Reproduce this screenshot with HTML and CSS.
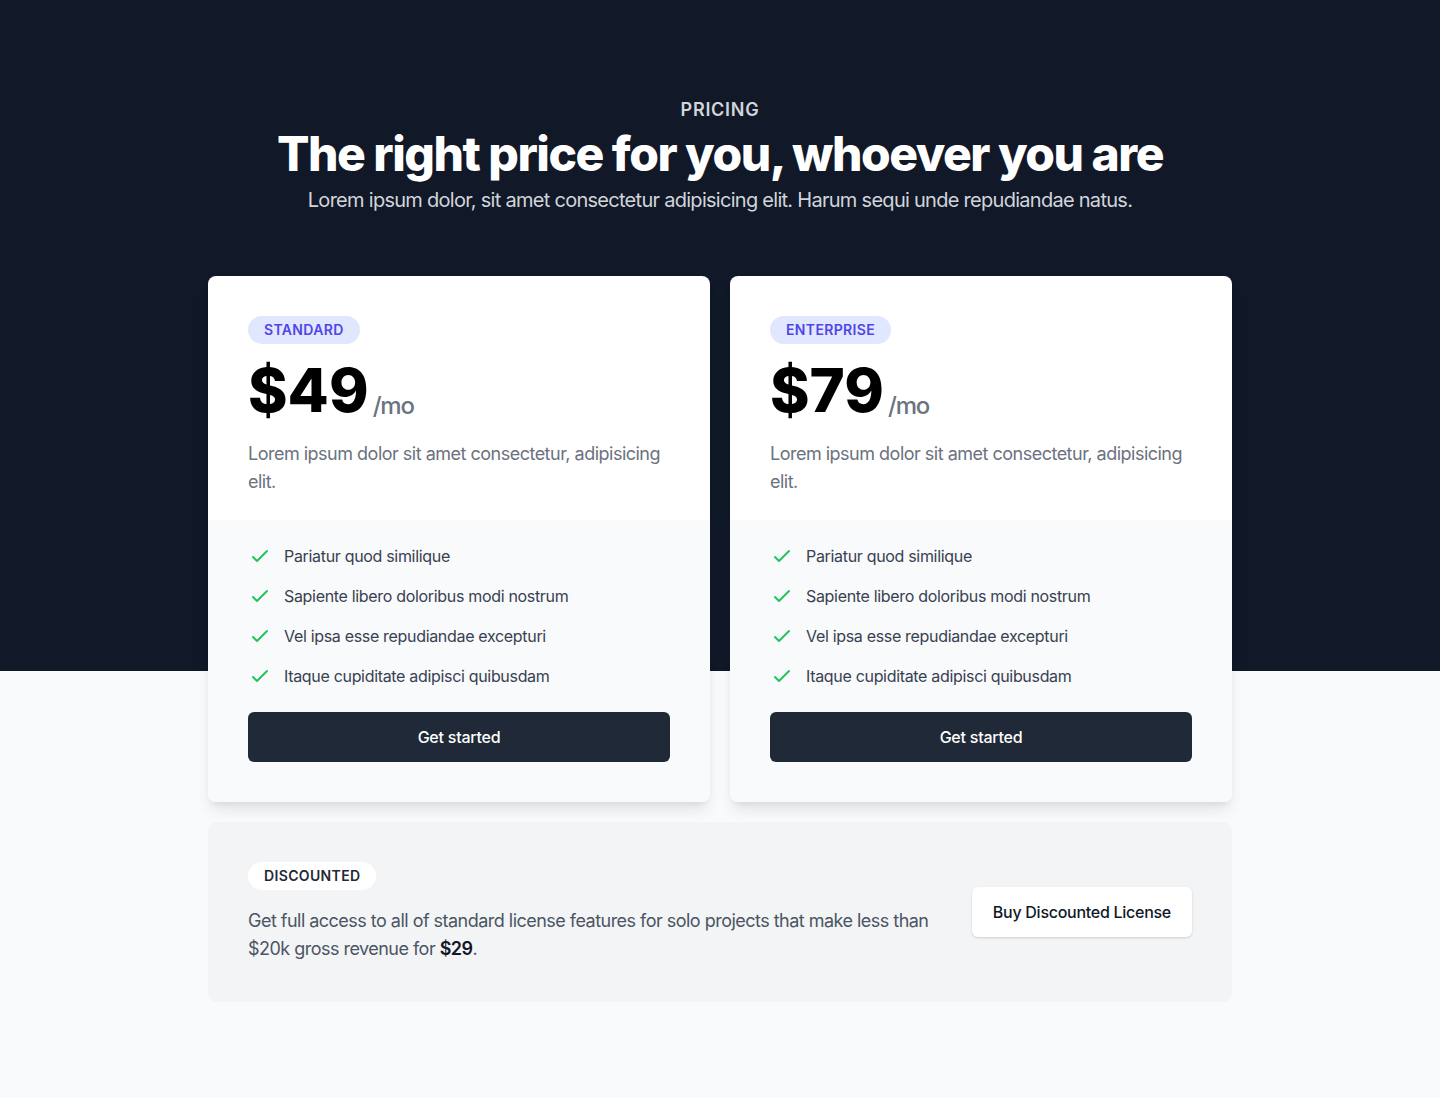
FILE: index.html
```html
<!DOCTYPE html>
<html lang="en">
<head>
<meta charset="utf-8">
<title>Pricing</title>
<link rel="stylesheet" href="styles.css">
</head>
<body>
<div class="page">
  <div class="hero">
    <div class="hero-inner">
      <h2 class="eyebrow">Pricing</h2>
      <p class="title">The right price for you, whoever you are</p>
      <p class="subtitle">Lorem ipsum dolor, sit amet consectetur adipisicing elit. Harum sequi unde repudiandae natus.</p>
    </div>
  </div>
  <div class="lower">
    <div class="cards-wrap">
      <div class="dark-fill"></div>
      <div class="cards">
        <div class="card">
          <div class="card-top">
            <span class="badge">Standard</span>
            <div class="price">$49<span class="per">/mo</span></div>
            <p class="desc">Lorem ipsum dolor sit amet consectetur, adipisicing elit.</p>
          </div>
          <div class="card-bottom">
            <ul class="features">
              <li><svg class="check" viewBox="0 0 24 24" fill="none" stroke="currentColor" stroke-width="2"><path stroke-linecap="round" stroke-linejoin="round" d="M5 13l4 4L19 7"/></svg><span>Pariatur quod similique</span></li>
              <li><svg class="check" viewBox="0 0 24 24" fill="none" stroke="currentColor" stroke-width="2"><path stroke-linecap="round" stroke-linejoin="round" d="M5 13l4 4L19 7"/></svg><span>Sapiente libero doloribus modi nostrum</span></li>
              <li><svg class="check" viewBox="0 0 24 24" fill="none" stroke="currentColor" stroke-width="2"><path stroke-linecap="round" stroke-linejoin="round" d="M5 13l4 4L19 7"/></svg><span>Vel ipsa esse repudiandae excepturi</span></li>
              <li><svg class="check" viewBox="0 0 24 24" fill="none" stroke="currentColor" stroke-width="2"><path stroke-linecap="round" stroke-linejoin="round" d="M5 13l4 4L19 7"/></svg><span>Itaque cupiditate adipisci quibusdam</span></li>
            </ul>
            <a class="btn-dark" href="#">Get started</a>
          </div>
        </div>
        <div class="card">
          <div class="card-top">
            <span class="badge">Enterprise</span>
            <div class="price">$79<span class="per">/mo</span></div>
            <p class="desc">Lorem ipsum dolor sit amet consectetur, adipisicing elit.</p>
          </div>
          <div class="card-bottom">
            <ul class="features">
              <li><svg class="check" viewBox="0 0 24 24" fill="none" stroke="currentColor" stroke-width="2"><path stroke-linecap="round" stroke-linejoin="round" d="M5 13l4 4L19 7"/></svg><span>Pariatur quod similique</span></li>
              <li><svg class="check" viewBox="0 0 24 24" fill="none" stroke="currentColor" stroke-width="2"><path stroke-linecap="round" stroke-linejoin="round" d="M5 13l4 4L19 7"/></svg><span>Sapiente libero doloribus modi nostrum</span></li>
              <li><svg class="check" viewBox="0 0 24 24" fill="none" stroke="currentColor" stroke-width="2"><path stroke-linecap="round" stroke-linejoin="round" d="M5 13l4 4L19 7"/></svg><span>Vel ipsa esse repudiandae excepturi</span></li>
              <li><svg class="check" viewBox="0 0 24 24" fill="none" stroke="currentColor" stroke-width="2"><path stroke-linecap="round" stroke-linejoin="round" d="M5 13l4 4L19 7"/></svg><span>Itaque cupiditate adipisci quibusdam</span></li>
            </ul>
            <a class="btn-dark" href="#">Get started</a>
          </div>
        </div>
      </div>
    </div>
    <div class="discount-wrap">
      <div class="discount">
        <div class="discount-text">
          <span class="badge badge-white">Discounted</span>
          <p class="discount-desc">Get full access to all of standard license features for solo projects that make less than $20k gross revenue for <strong>$29</strong>.</p>
        </div>
        <a class="btn-white" href="#">Buy Discounted License</a>
      </div>
    </div>
  </div>
</div>
</body>
</html>
```

FILE: styles.css
```css
* { box-sizing: border-box; }
html, body { margin: 0; padding: 0; }
body {
  font-family: Inter, "Noto Sans", "Liberation Sans", sans-serif;
  background: #f9fafb;
  -webkit-font-smoothing: antialiased;
}
.page { background: #111827; }
.hero { padding-top: 98px; }
.hero-inner {
  max-width: 1280px;
  margin: 0 auto;
  padding: 0 32px;
  text-align: center;
  display: flex;
  flex-direction: column;
  gap: 8px;
}
.eyebrow {
  margin: 0;
  font-size: 18px;
  line-height: 24px;
  font-weight: 600;
  color: #d1d5db;
  text-transform: uppercase;
  letter-spacing: 0.04em;
}
.title {
  margin: 0;
  font-size: 48px;
  line-height: 48px;
  font-weight: 800;
  color: #fff;
  letter-spacing: -0.031em;
}
.subtitle {
  margin: 0;
  font-size: 20px;
  line-height: 28px;
  color: #d1d5db;
  letter-spacing: -0.036em;
}
.lower {
  margin-top: 62px;
  padding-bottom: 96px;
  background: #f9fafb;
}
.cards-wrap { position: relative; }
.dark-fill {
  position: absolute;
  left: 0; right: 0; top: 0;
  height: 75%;
  background: #111827;
}
.cards {
  position: relative;
  z-index: 1;
  max-width: 1024px;
  margin: 0 auto;
  display: grid;
  grid-template-columns: 1fr 1fr;
  gap: 20px;
}
.card {
  display: flex;
  flex-direction: column;
  border-radius: 8px;
  overflow: hidden;
  box-shadow: 0 10px 15px -3px rgba(0,0,0,0.1), 0 4px 6px -2px rgba(0,0,0,0.05);
}
.card-top {
  background: #fff;
  padding: 40px 40px 24px;
}
.badge {
  display: inline-flex;
  padding: 4px 16px;
  border-radius: 9999px;
  font-size: 14px;
  line-height: 20px;
  font-weight: 600;
  letter-spacing: 0.025em;
  text-transform: uppercase;
  background: #e0e7ff;
  color: #4f46e5;
}
.price {
  margin-top: 16px;
  display: flex;
  align-items: baseline;
  font-size: 60px;
  line-height: 60px;
  font-weight: 800;
  color: #000;
}
.per {
  margin-left: 4px;
  font-size: 24px;
  line-height: 32px;
  font-weight: 500;
  color: #6b7280;
  letter-spacing: -0.05em;
  position: relative;
  top: 2px;
}
.desc {
  margin: 20px 0 0;
  font-size: 18px;
  line-height: 28px;
  color: #6b7280;
  letter-spacing: -0.028em;
}
.card-bottom {
  flex: 1;
  background: #f9fafb;
  padding: 24px 40px 40px;
  display: flex;
  flex-direction: column;
  gap: 24px;
}
.features {
  list-style: none;
  margin: 0;
  padding: 0;
  display: flex;
  flex-direction: column;
  gap: 16px;
}
.features li {
  display: flex;
  align-items: flex-start;
  font-size: 16px;
  line-height: 24px;
  color: #374151;
  letter-spacing: -0.02em;
}
.check {
  flex-shrink: 0;
  width: 24px;
  height: 24px;
  color: #22c55e;
  margin-right: 12px;
}
.btn-dark {
  display: flex;
  align-items: center;
  justify-content: center;
  padding: 12px 20px;
  border: 1px solid transparent;
  border-radius: 6px;
  background: #1f2937;
  color: #fff;
  font-size: 16px;
  line-height: 24px;
  font-weight: 500;
  text-decoration: none;
  letter-spacing: -0.015em;
}
.discount-wrap {
  max-width: 1024px;
  margin: 20px auto 0;
}
.discount {
  background: #f3f4f6;
  border-radius: 8px;
  padding: 40px;
  display: flex;
  align-items: center;
}
.discount-text { flex: 1; }
.badge-white {
  background: #fff;
  color: #1f2937;
}
.discount-desc {
  margin: 16px 0 0;
  font-size: 18px;
  line-height: 28px;
  color: #4b5563;
  letter-spacing: -0.029em;
  position: relative;
  top: 1px;
}
.discount-desc strong {
  font-weight: 600;
  color: #111827;
}
.btn-white {
  flex-shrink: 0;
  margin-left: 40px;
  display: flex;
  align-items: center;
  justify-content: center;
  padding: 12px 20px;
  border: 1px solid transparent;
  border-radius: 6px;
  background: #fff;
  color: #111827;
  font-size: 16px;
  line-height: 24px;
  font-weight: 500;
  text-decoration: none;
  letter-spacing: -0.017em;
  box-shadow: 0 1px 3px 0 rgba(0,0,0,0.1), 0 1px 2px 0 rgba(0,0,0,0.06);
}
```
